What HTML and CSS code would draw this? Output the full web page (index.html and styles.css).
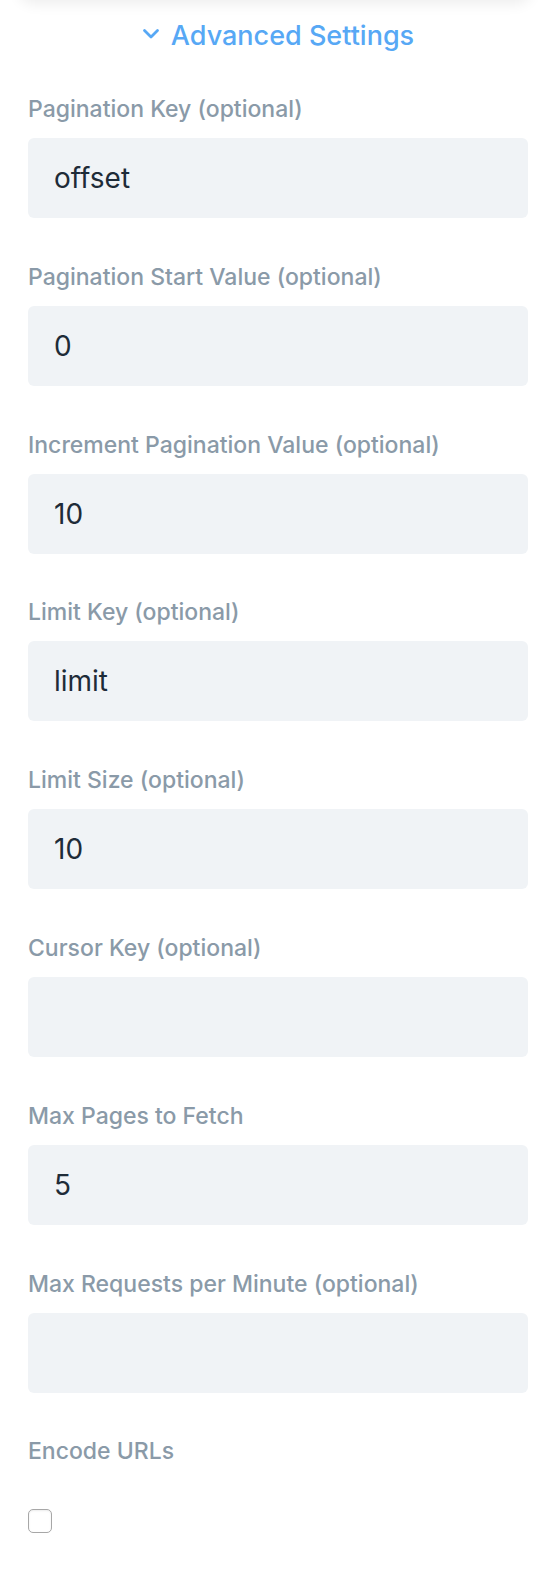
FILE: index.html
```html
<!DOCTYPE html>
<html>
<head>
  <meta charset="UTF-8">
  <title>Advanced Settings</title>
  <link rel="stylesheet" href="styles.css">
</head>
<body>
  <div class="card-edge"></div>
  <main>
    <button type="button" class="toggle">
      <svg class="chevron" viewBox="0 0 18 11" width="18" height="11" aria-hidden="true">
        <path d="M2.5 2.5l6.5 6.5 6.5-6.5" fill="none" stroke="currentColor" stroke-width="2.8" stroke-linecap="round" stroke-linejoin="round"/>
      </svg>
      Advanced Settings
    </button>
    <form class="settings">
      <div class="field">
        <label for="pkey">Pagination Key (optional)</label>
        <input type="text" id="pkey" value="offset">
      </div>
      <div class="field">
        <label for="pstart">Pagination Start Value (optional)</label>
        <input type="text" id="pstart" value="0">
      </div>
      <div class="field">
        <label for="pinc">Increment Pagination Value (optional)</label>
        <input type="text" id="pinc" value="10">
      </div>
      <div class="field">
        <label for="lkey">Limit Key (optional)</label>
        <input type="text" id="lkey" value="limit">
      </div>
      <div class="field">
        <label for="lsize">Limit Size (optional)</label>
        <input type="text" id="lsize" value="10">
      </div>
      <div class="field">
        <label for="ckey">Cursor Key (optional)</label>
        <input type="text" id="ckey" value="">
      </div>
      <div class="field">
        <label for="maxpages">Max Pages to Fetch</label>
        <input type="text" id="maxpages" value="5">
      </div>
      <div class="field">
        <label for="rpm">Max Requests per Minute (optional)</label>
        <input type="text" id="rpm" value="">
      </div>
      <div class="field">
        <label for="encode">Encode URLs</label>
        <input type="checkbox" id="encode" class="check">
      </div>
    </form>
  </main>
</body>
</html>
```

FILE: styles.css
```css
:root {
  --blue: #57a8f5;
  --label: #8a9aa8;
  --input-bg: #f0f3f6;
  --text: #1e2b38;
  --font-family-sans-serif: Inter, "Noto Sans", sans-serif;
}

body {
  margin: 0;
  font-family: var(--font-family-sans-serif);
  background-color: white;
  color: var(--text);
}

.card-edge {
  height: 20px;
  margin: -20px 18px 0;
  border-radius: 0 0 16px 16px;
  background-color: white;
  box-shadow: 0 4px 14px rgba(0, 0, 0, 0.07);
}

main {
  padding: 0 22px 40px 28px;
  display: flex;
  flex-direction: column;
}

.toggle {
  align-self: center;
  display: flex;
  align-items: center;
  gap: 11px;
  margin-top: 19px;
  padding: 0;
  background: none;
  border: none;
  color: var(--blue);
  font-family: inherit;
  font-size: 27px;
  font-weight: 500;
  line-height: 34px;
  cursor: pointer;
}

.chevron {
  margin-top: -5px;
}

.settings {
  display: flex;
  flex-direction: column;
  gap: 42.8px;
  margin-top: 40px;
}

.field {
  display: flex;
  flex-direction: column;
  gap: 13px;
}

.field label {
  color: var(--label);
  font-size: 23px;
  font-weight: 500;
  line-height: 32px;
}

.field input[type="text"] {
  height: 80px;
  box-sizing: border-box;
  padding: 0 26px;
  background-color: var(--input-bg);
  border: none;
  border-radius: 6px;
  outline: none;
  font-family: inherit;
  font-size: 28px;
  color: var(--text);
}

.check {
  appearance: none;
  width: 24px;
  height: 24px;
  margin: 29px 0 0;
  border: 1.5px solid #a7a7a7;
  border-radius: 5px;
  background-color: white;
  box-shadow: inset 0 1px 2px rgba(0, 0, 0, 0.08);
}
```
